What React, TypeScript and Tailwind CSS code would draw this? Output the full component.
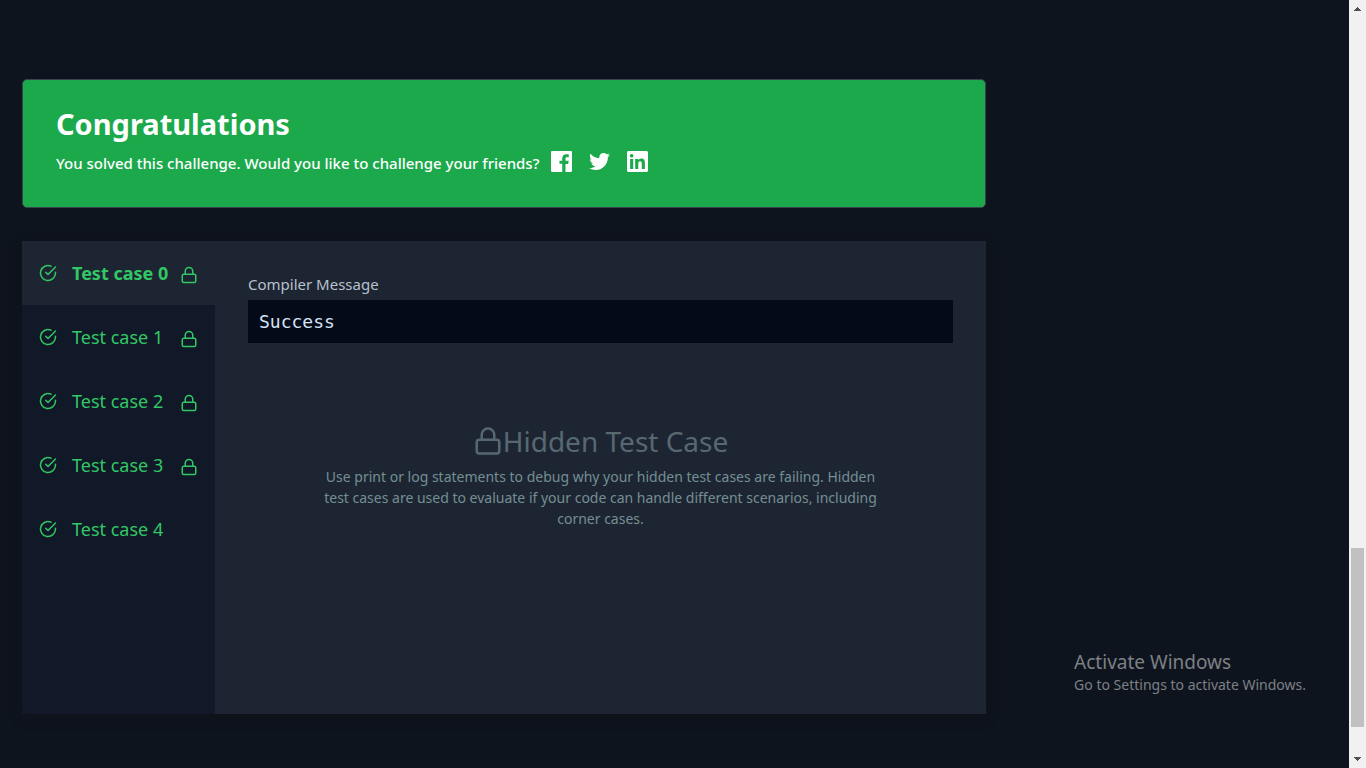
import { FaTwitter } from "react-icons/fa";

type IconProps = { className?: string };

function LockIcon({ className }: IconProps) {
  return (
    <svg viewBox="0 0 24 24" className={className} fill="none" stroke="currentColor" strokeWidth="2" strokeLinecap="round" strokeLinejoin="round" aria-hidden="true">
      <rect x="3" y="11" width="18" height="11" rx="2" />
      <path d="M7 11V7a5 5 0 0 1 10 0v4" />
    </svg>
  );
}

function CheckIcon({ className }: IconProps) {
  return (
    <svg viewBox="0 0 24 24" className={className} fill="none" stroke="currentColor" strokeWidth="2" strokeLinecap="round" strokeLinejoin="round" aria-hidden="true">
      <path d="M22 11.08V12a10 10 0 1 1-5.93-9.14" />
      <path d="M22 4 12 14.01l-3-3" />
    </svg>
  );
}

function FacebookIcon({ className }: IconProps) {
  return (
    <svg viewBox="0 0 24 24" className={className} fill="currentColor" aria-hidden="true">
      <path d="M22.676 0H1.324C.593 0 0 .593 0 1.324v21.352C0 23.408.593 24 1.324 24h11.494v-9.294H9.689v-3.621h3.129V8.41c0-3.099 1.894-4.785 4.659-4.785 1.325 0 2.464.097 2.796.141v3.24h-1.921c-1.5 0-1.792.721-1.792 1.771v2.311h3.584l-.465 3.63H16.56V24h6.115c.733 0 1.325-.592 1.325-1.324V1.324C24 .593 23.408 0 22.676 0" />
    </svg>
  );
}

function LinkedInIcon({ className }: IconProps) {
  return (
    <svg viewBox="0 0 24 24" className={className} fill="currentColor" aria-hidden="true">
      <path d="M20.447 20.452h-3.554v-5.569c0-1.328-.027-3.037-1.852-3.037-1.853 0-2.136 1.445-2.136 2.939v5.667H9.351V9h3.414v1.561h.046c.477-.9 1.637-1.85 3.37-1.85 3.601 0 4.267 2.37 4.267 5.455v6.286zM5.337 7.433c-1.144 0-2.063-.926-2.063-2.065 0-1.138.92-2.063 2.063-2.063 1.14 0 2.064.925 2.064 2.063 0 1.139-.925 2.065-2.064 2.065zm1.782 13.019H3.555V9h3.564v11.452zM22.225 0H1.771C.792 0 0 .774 0 1.729v20.542C0 23.227.792 24 1.771 24h20.451C23.2 24 24 23.227 24 22.271V1.729C24 .774 23.2 0 22.222 0h.003z" />
    </svg>
  );
}

const testCases = [
  { name: "Test case 0", hidden: true },
  { name: "Test case 1", hidden: true },
  { name: "Test case 2", hidden: true },
  { name: "Test case 3", hidden: true },
  { name: "Test case 4", hidden: false },
];

function Banner() {
  return (
    <section className="rounded-[5px] border border-[#39424e] bg-[#1ba94c] px-[33px] pt-6 pb-[33px] text-white">
      <h1 className="text-[29px] leading-10 font-bold">Congratulations</h1>
      <div className="mt-1 flex items-center">
        <p className="pt-1 text-[15px] leading-[22px] font-medium">You solved this challenge. Would you like to challenge your friends?</p>
        <div className="ml-3 flex items-center gap-[17px]">
          <a href="#facebook" aria-label="Share on Facebook"><FacebookIcon className="size-[21px]" /></a>
          <a href="#twitter" aria-label="Share on Twitter"><FaTwitter className="size-[21px]" /></a>
          <a href="#linkedin" aria-label="Share on LinkedIn"><LinkedInIcon className="size-[21px]" /></a>
        </div>
      </div>
    </section>
  );
}

function TestCaseTabs() {
  return (
    <nav className="w-[193px] shrink-0 bg-[#111827]" aria-label="Test cases">
      {testCases.map((test, i) => (
        <button
          key={test.name}
          type="button"
          className={
            i === 0
              ? "flex h-16 w-full items-center bg-[#1e2532] pl-[17px] text-left text-lg font-bold text-[#32c766]"
              : "flex h-16 w-full items-center pl-[17px] text-left text-lg text-[#32c766]"
          }
        >
          <CheckIcon className="size-[18px] shrink-0" />
          <span className="ml-[15px] w-[108px]">{test.name}</span>
          {test.hidden && <LockIcon className="mt-1 size-[18px] shrink-0" />}
        </button>
      ))}
    </nav>
  );
}

function ResultPanel() {
  return (
    <div className="min-w-0 flex-1 bg-[#1e2532] px-[33px] pt-[31px]">
      <h2 className="text-[15px] leading-6 text-[#b7c0cd]">Compiler Message</h2>
      <pre className="mt-1 bg-[#040a18] px-[11px] py-2 font-['DejaVu_Sans_Mono',monospace] text-lg leading-[27px] text-[#d5e3f7]">Success</pre>
      <div className="mx-auto mt-20 max-w-[576px] text-center">
        <h3 className="flex items-center justify-center text-[28px] leading-9 text-[#576871]">
          <LockIcon className="size-[30px] shrink-0" />
          <span>Hidden Test Case</span>
        </h3>
        <p className="mt-[7px] text-sm leading-[21px] text-[#738f93]">
          Use print or log statements to debug why your hidden test cases are failing. Hidden test cases are used to evaluate if your code can handle different scenarios, including corner cases.
        </p>
      </div>
    </div>
  );
}

function Scrollbar() {
  return (
    <div className="flex w-[17px] shrink-0 flex-col items-center justify-between bg-[#f1f1f1] py-[7px]" aria-hidden="true">
      <svg viewBox="0 0 7 4" className="h-1 w-[7px]" fill="#505050"><path d="M3 0h1v1h1v1h1v1h1v1H0V3h1V2h1V1h1z" /></svg>
      <div className="mt-auto mb-[30px] h-[179px] w-[13px] bg-[#c1c1c1]" />
      <svg viewBox="0 0 7 4" className="h-1 w-[7px]" fill="#505050"><path d="M0 0h7v1H6v1H5v1H4v1H3V3H2V2H1V1H0z" /></svg>
    </div>
  );
}

export default function App() {
  return (
    <div className="relative flex min-h-screen bg-[#0e141e] font-['Noto_Sans',sans-serif]">
      <main className="min-w-0 flex-1 px-[22px] pt-[79px] pb-[54px]">
        <div className="flex w-full max-w-[964px] flex-col gap-[33px]">
          <Banner />
          <section className="flex min-h-[473px] shadow-[0_4px_10px_#0f121b]">
            <TestCaseTabs />
            <ResultPanel />
          </section>
        </div>
      </main>
      <Scrollbar />
      <aside className="absolute right-[60px] bottom-[73px] text-[#7c8085]">
        <p className="text-[19px] leading-6">Activate Windows</p>
        <p className="text-sm leading-[21px]">Go to Settings to activate Windows.</p>
      </aside>
    </div>
  );
}
